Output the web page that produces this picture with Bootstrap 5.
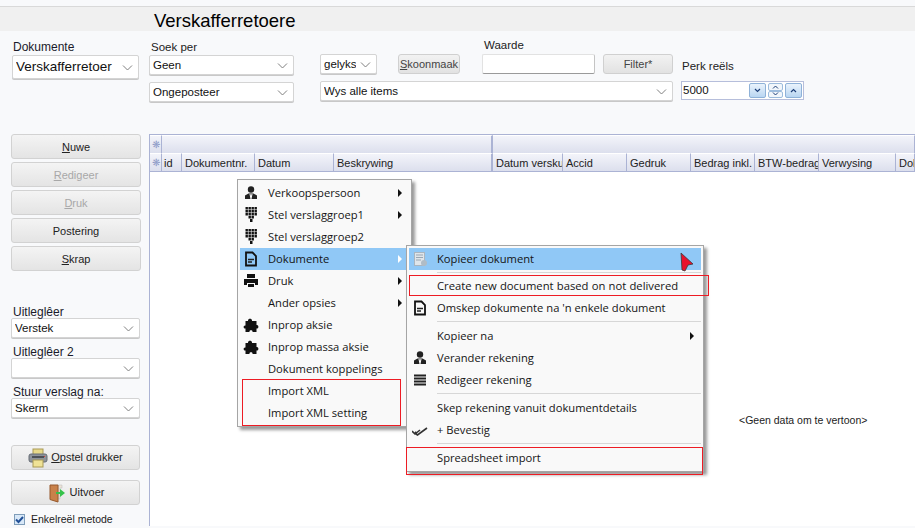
<!DOCTYPE html>
<html lang="en">
<head>
    <meta charset="UTF-8">
    <title>Verskafferretoere</title>
    <link href="https://cdn.jsdelivr.net/npm/bootstrap@5.3.0/dist/css/bootstrap.min.css" rel="stylesheet">
    <script src="https://cdn.jsdelivr.net/npm/bootstrap@5.3.0/dist/js/bootstrap.bundle.min.js"></script>
    <style>
        html, body { height: 100%; overflow: hidden; }
        body { background: #f8f9fb; font-family: "Liberation Sans", Arial, sans-serif; font-size: 11px; color: #111; position: relative; width: 915px; height: 528px; }

        /* Title strip */
        .top-gap { height: 6px; border-bottom: 1px solid #d9d9d9; box-sizing: content-box; }
        .title-strip { height: 24px; background: #f0f0f0; padding-left: 154px; font-size: 18.5px; line-height: 27px; color: #000; }

        /* Shared select look */
        .field-box.form-select { font-size: 11.5px; line-height: 16px; height: 20px; padding: 0 20px 0 3px; border: 1px solid #d4d4d4; border-radius: 2px; color: #111; background-size: 11px 11px; background-position: right 5px center; background-image: url("data:image/svg+xml,%3csvg xmlns='http://www.w3.org/2000/svg' viewBox='0 0 11 11'%3e%3cpath fill='none' stroke='%23808080' d='M1 3.500l4.500 4.500L10 3.500'/%3e%3c/svg%3e"); box-shadow: 0 1px 0 #c8c8c8; white-space: nowrap; overflow: hidden; text-overflow: clip; }

        /* Left column */
        .side-col { width: 149px; flex: none; }
        .side-label { margin: 9px 0 1px 13px; font-size: 12px; line-height: 14px; color: #1a1a2a; }
        .doc-select.form-select { width: 127px; height: 24px; margin-left: 12px; font-size: 13.5px; line-height: 20px; padding-left: 3px; }
        .gap-docs { height: 55px; }
        .side-btn.btn { display: block; width: 130px; height: 25px; margin: 0 0 3px 11px; padding: 0; font-size: 11px; line-height: 24px; color: #222; border: 1px solid #d2d2d2; border-radius: 3px; background: linear-gradient(#f4f4f4, #e4e4e4); }
        .side-btn.btn.off { color: #a8a8a8; opacity: 1; }
        .gap-layout { height: 32px; }
        .left-label { display: block; margin-left: 13px; font-size: 12px; line-height: 12px; color: #1a1a2a; }
        .left-label.spaced { margin-top: 8px; }
        .left-field.form-select { width: 129px; margin-left: 11px; }
        .gap-tools { height: 27px; }
        .tool-btn.btn { display: flex; align-items: center; justify-content: center; gap: 3px; width: 129px; height: 25px; margin-left: 11px; padding: 0; font-size: 11px; color: #222; border: 1px solid #d2d2d2; border-radius: 3px; background: linear-gradient(#f4f4f4, #e4e4e4); }
        .tool-btn.btn + .tool-btn.btn { margin-top: 10px; }
        .single-check { margin: 7px 0 0 14px; font-size: 10.5px; line-height: 14px; color: #222; gap: 6px; }
        .single-check input { appearance: none; width: 11px; height: 11px; margin: 0; border: 1px solid #7f9db9; background: #d8e8f8 url("data:image/svg+xml,%3csvg xmlns='http://www.w3.org/2000/svg' viewBox='0 0 11 11'%3e%3cpath fill='none' stroke='%23214f96' stroke-width='2' d='M2 5.500l2.500 2.500L9 3'/%3e%3c/svg%3e") center / 11px 11px no-repeat; }

        /* Filter area */
        .filter-area { height: 103px; }
        .filter-search { width: 171px; }
        .filter-search .form-select { width: 145px; }
        .filter-search .form-select + .form-select { margin-top: 7px; }
        .filter-label { font-size: 11.5px; line-height: 14px; color: #222; }
        .label-search { margin: 9px 0 1px 2px; }
        .filter-match { width: 353px; }
        .match-row { margin-top: 23px; }
        .match-select.form-select { width: 57px; margin-right: 21px; }
        .label-value { margin: -16px 0 2px 2px; }
        .items-select.form-select { width: 353px; margin-top: 7px; }
        .mid-btn.btn { height: 20px; padding: 0; font-size: 11px; line-height: 18px; color: #444; border: 1px solid #d0d0d0; border-radius: 3px; background: linear-gradient(#f2f2f2, #e2e2e2); }
        .clear-btn { width: 62px; }
        .filter-btn { width: 70px; }
        .value-box.form-control { width: 113px; height: 20px; padding: 0 3px; border: 1px solid #e2e2e2; border-bottom-color: #9a9a9a; border-right-color: #c4c4c4; border-radius: 2px; }
        .filter-limit { margin-left: 8px; }
        .label-limit { margin: 28px 0 8px 1px; }
        .limit-box { width: 123px; height: 19px; border: 1px solid #b6bedb; background: #fff; font-size: 11.5px; line-height: 17px; padding: 0 1px 0 1px; gap: 2px; }
        .spin-btn { width: 17px; height: 15px; border: 1px solid #8fb2d8; border-radius: 2px; background: linear-gradient(#eaf3fc, #b9d6f2); display: flex; align-items: center; justify-content: center; }
        .spin-mid { width: 15px; height: 15px; display: flex; flex-direction: column; }
        .spin-half { flex: 1; border: 1px solid #9dbcdd; border-radius: 2px; background: #f1f6fb; display: flex; align-items: center; justify-content: center; }

        /* Grid */
        .data-grid { flex: 1; border-left: 1px solid #abb3d4; background: #fff; height: 400px; overflow: hidden; position: relative; }
        .band-row, .head-row { display: grid; height: 19px; }
        .band-row { grid-template-columns: 12px 331px 1fr; border-top: 1px solid #abb3d4; }
        .head-row { grid-template-columns: 12px 20px 73px 79px 159px 70px 64px 64px 64px 64px 77px 1fr; border-bottom: 1px solid #abb3d4; }
        .hcell { height: 100%; padding-left: 3px; font-size: 11px; line-height: 18px; color: #222; background: linear-gradient(#f3f4fa, #dcdfed); border-right: 1px solid #abb3d4; white-space: nowrap; overflow: hidden; border-top: 1px solid #fff; }
        .hcell.split { border-right-width: 2px; }
        .hcell.star { color: #8f9cc8; font-size: 10px; padding-left: 2px; }
        .hcell.tight { padding-left: 2px; }
        .no-data { position: absolute; left: 589px; top: 279px; font-size: 10.500px; line-height: 14px; color: #222; }

        /* Context menus */
        .ctx-menu { position: absolute; display: block; margin: 0; padding: 2px; min-width: 0; background: #f9f9f9; border: 1px solid #a5a5a5; border-radius: 0; box-shadow: 3px 3px 3px rgba(0,0,0,.4); font-family: "Open Sans", "Noto Sans", sans-serif; color: #111; }
        .ctx-menu .dropdown-item { display: flex; align-items: center; height: 22px; padding: 0 0 0 28px; position: relative; font-size: 11.2px; color: #151515; white-space: nowrap; background: transparent; }
        .ctx-menu .dropdown-item.hot { background: #90c8f6; }
        .ctx-menu .dropdown-item.wide-item { font-size: 11.25px; word-spacing: .3px; }
        .ctx-menu .dropdown-divider { height: 0; margin: 2px 0 3px 28px; border-top: 1px solid #d7d7d7; opacity: 1; }
        .ctx-menu .dropdown-divider.first { margin-bottom: 2px; }
        .menu-one { left: 237px; top: 179px; width: 175px; z-index: 1001; }
        .menu-two { left: 406px; top: 245px; width: 298px; z-index: 1002; }
        .item-icon { position: absolute; left: 3px; top: 3px; width: 16px; height: 16px; }
        .sub-arrow { position: absolute; right: 7px; top: 7px; width: 0; height: 0; border-left: 4px solid #111; border-top: 4px solid transparent; border-bottom: 4px solid transparent; }
        .hot .sub-arrow { border-left-color: #fff; }

        /* Red annotations drawn on top of the screenshot */
        .red-mark { position: absolute; border: 1px solid #ed1c24; z-index: 1100; pointer-events: none; }
        .mark-xml { left: 242px; top: 379px; width: 159px; height: 47px; }
        .mark-create { left: 409px; top: 275px; width: 300px; height: 21px; }
        .mark-sheet { left: 406px; top: 447px; width: 297px; height: 28px; }
        .red-cursor { position: absolute; left: 680px; top: 252px; z-index: 1101; }
    </style>
</head>
<body>

<div class="top-gap"></div>
<div class="title-strip">Verskafferretoere</div>

<div class="d-flex">
    <!-- left column -->
    <div class="side-col">
        <div class="side-label">Dokumente</div>
        <select class="form-select field-box doc-select"><option>Verskafferretoer</option></select>

        <div class="gap-docs"></div>
        <button class="btn side-btn"><u>N</u>uwe</button>
        <button class="btn side-btn off"><u>R</u>edigeer</button>
        <button class="btn side-btn off"><u>D</u>ruk</button>
        <button class="btn side-btn">Postering</button>
        <button class="btn side-btn"><u>S</u>krap</button>

        <div class="gap-layout"></div>
        <span class="left-label">Uitleglêer</span>
        <select class="form-select field-box left-field"><option>Verstek</option></select>
        <span class="left-label spaced">Uitleglêer 2</span>
        <select class="form-select field-box left-field"><option></option></select>
        <span class="left-label spaced">Stuur verslag na:</span>
        <select class="form-select field-box left-field"><option>Skerm</option></select>

        <div class="gap-tools"></div>
        <button class="btn tool-btn">
            <svg width="20" height="20" viewBox="0 0 20 20"><rect x="5" y="1" width="10" height="6" fill="#e7d98a" stroke="#a99a55"/><rect x="1" y="6" width="18" height="8" rx="2" fill="#8d939b" stroke="#666c74"/><rect x="4" y="8" width="12" height="2" fill="#4d5157"/><rect x="16" y="8" width="1" height="1" fill="#d33"/><rect x="5" y="12" width="10" height="7" fill="#efe296" stroke="#a99a55"/></svg>
            <span><u>O</u>pstel drukker</span>
        </button>
        <button class="btn tool-btn">
            <svg width="20" height="20" viewBox="0 0 20 20"><path d="M11 2h4v3h-2v11h-2z" fill="#ece4d8" stroke="#bbb" stroke-width=".5"/><path d="M3 2l8 0v17l-8-2.500z" fill="#c9814a" stroke="#96592c"/><path d="M9 9h4V6l5 4-5 4v-3H9z" fill="#35c24a"/></svg>
            <span>Uitvoer</span>
        </button>
        <label class="d-flex align-items-center single-check">
            <input type="checkbox" checked> Enkelreël metode
        </label>
    </div>

    <!-- right side -->
    <div class="flex-grow-1 d-flex flex-column">
        <div class="filter-area d-flex">
            <div class="filter-search">
                <div class="filter-label label-search">Soek per</div>
                <select class="form-select field-box"><option>Geen</option></select>
                <select class="form-select field-box"><option>Ongeposteer</option></select>
            </div>
            <div class="filter-match">
                <div class="d-flex match-row">
                    <select class="form-select field-box match-select"><option>gelyksoortig</option></select>
                    <button class="btn mid-btn clear-btn"><u>S</u>koonmaak</button>
                    <div class="ms-auto">
                        <div class="filter-label label-value">Waarde</div>
                        <input class="form-control value-box" type="text">
                    </div>
                    <button class="btn mid-btn filter-btn ms-2">Filter*</button>
                </div>
                <select class="form-select field-box items-select"><option>Wys alle items</option></select>
            </div>
            <div class="filter-limit">
                <div class="filter-label label-limit">Perk reëls</div>
                <div class="d-flex align-items-center limit-box">
                    <span class="flex-grow-1">5000</span>
                    <span class="spin-btn"><svg width="7" height="5" viewBox="0 0 7 5"><path d="M1 1l2.500 2.500L6 1" fill="none" stroke="#1d3f78" stroke-width="1.200"/></svg></span>
                    <span class="spin-mid">
                        <span class="spin-half"><svg width="7" height="4" viewBox="0 0 7 4"><path d="M1 3.500L3.500 1 6 3.500" fill="none" stroke="#1d3f78"/></svg></span>
                        <span class="spin-half"><svg width="7" height="4" viewBox="0 0 7 4"><path d="M1 .500L3.500 3 6 .500" fill="none" stroke="#1d3f78"/></svg></span>
                    </span>
                    <span class="spin-btn"><svg width="7" height="5" viewBox="0 0 7 5"><path d="M1 4l2.500-2.500L6 4" fill="none" stroke="#1d3f78" stroke-width="1.200"/></svg></span>
                </div>
            </div>
        </div>

        <div class="data-grid">
            <div class="band-row">
                <div class="hcell star">❋</div>
                <div class="hcell split"></div>
                <div class="hcell"></div>
            </div>
            <div class="head-row">
                <div class="hcell star">❋</div>
                <div class="hcell tight">id</div>
                <div class="hcell">Dokumentnr.</div>
                <div class="hcell">Datum</div>
                <div class="hcell split">Beskrywing</div>
                <div class="hcell">Datum versku</div>
                <div class="hcell">Accid</div>
                <div class="hcell">Gedruk</div>
                <div class="hcell">Bedrag inkl.</div>
                <div class="hcell">BTW-bedrag</div>
                <div class="hcell">Verwysing</div>
                <div class="hcell">Dok</div>
            </div>
            <div class="no-data">&lt;Geen data om te vertoon&gt;</div>
        </div>
    </div>
</div>

<!-- first context menu -->
<ul class="dropdown-menu ctx-menu menu-one list-unstyled">
    <li><a class="dropdown-item"><svg class="item-icon"><use href="#i-person"/></svg>Verkoopspersoon<i class="sub-arrow"></i></a></li>
    <li><a class="dropdown-item"><svg class="item-icon"><use href="#i-dots"/></svg>Stel verslaggroep1<i class="sub-arrow"></i></a></li>
    <li><a class="dropdown-item"><svg class="item-icon"><use href="#i-dots"/></svg>Stel verslaggroep2</a></li>
    <li><a class="dropdown-item hot"><svg class="item-icon"><use href="#i-doc"/></svg>Dokumente<i class="sub-arrow"></i></a></li>
    <li><a class="dropdown-item"><svg class="item-icon"><use href="#i-print"/></svg>Druk<i class="sub-arrow"></i></a></li>
    <li><a class="dropdown-item">Ander opsies<i class="sub-arrow"></i></a></li>
    <li><a class="dropdown-item"><svg class="item-icon"><use href="#i-puzzle"/></svg>Inprop aksie</a></li>
    <li><a class="dropdown-item"><svg class="item-icon"><use href="#i-puzzle"/></svg>Inprop massa aksie</a></li>
    <li><a class="dropdown-item">Dokument koppelings</a></li>
    <li><a class="dropdown-item">Import XML</a></li>
    <li><a class="dropdown-item">Import XML setting</a></li>
</ul>

<!-- second context menu -->
<ul class="dropdown-menu ctx-menu menu-two list-unstyled">
    <li><a class="dropdown-item hot"><svg class="item-icon" viewBox="0 0 16 16"><rect x="2.500" y="1.500" width="10" height="13" fill="#dfe5ea" stroke="#aab5bf"/><path d="M4 4h7M4 6.500h7M4 9h5" stroke="#9aa7b3"/><circle cx="12" cy="12" r="3" fill="#b0bcc6"/></svg>Kopieer dokument</a></li>
    <li><hr class="dropdown-divider first"></li>
    <li><a class="dropdown-item wide-item">Create new document based on not delivered</a></li>
    <li><a class="dropdown-item"><svg class="item-icon"><use href="#i-doc"/></svg>Omskep dokumente na 'n enkele dokument</a></li>
    <li><hr class="dropdown-divider"></li>
    <li><a class="dropdown-item">Kopieer na<i class="sub-arrow"></i></a></li>
    <li><a class="dropdown-item"><svg class="item-icon"><use href="#i-person"/></svg>Verander rekening</a></li>
    <li><a class="dropdown-item"><svg class="item-icon" viewBox="0 0 16 16"><path d="M2 2.500h12v2H2zM2 5.500h12v2H2zM2 8.500h12v2H2zM2 11.500h12v2H2z" fill="#222"/></svg>Redigeer rekening</a></li>
    <li><hr class="dropdown-divider"></li>
    <li><a class="dropdown-item">Skep rekening vanuit dokumentdetails</a></li>
    <li><a class="dropdown-item"><svg class="item-icon" viewBox="0 0 16 16"><path d="M0 9l3 3 5-4M4 12l1.500 1L15 6M3 10l2 1.500" fill="none" stroke="#333" stroke-width="1.600"/></svg>+ Bevestig</a></li>
    <li><hr class="dropdown-divider"></li>
    <li><a class="dropdown-item">Spreadsheet import</a></li>
</ul>

<div class="red-mark mark-xml"></div>
<div class="red-mark mark-create"></div>
<div class="red-mark mark-sheet"></div>
<svg class="red-cursor" width="14" height="20" viewBox="0 0 14 20"><path d="M1 1l12 11-5 1-3 6-3-1z" fill="#e8112d" stroke="#3a3a3a" stroke-width=".8"/></svg>

<!-- shared icons -->
<svg width="0" height="0" class="position-absolute">
    <symbol id="i-person" viewBox="0 0 16 16"><circle cx="8" cy="4.500" r="3.200" fill="#222"/><path d="M2 14v-3.500l3.500-2h5l3.500 2V14z" fill="#222"/><path d="M6.500 9h1l.5 2 .5-2h1L8.500 14h-1z" fill="#fff"/></symbol>
    <symbol id="i-dots" viewBox="0 0 16 16"><path d="M2.500 0h2.400v2.400H2.500zM5.500 0h2.400v2.400H5.500zM8.500 0h2.400v2.400H8.500zM11.500 0h2.400v2.400h-2.400zM2.500 3h2.400v2.400H2.500zM5.500 3h2.400v2.400H5.500zM8.500 3h2.400v2.400H8.500zM11.500 3h2.400v2.400h-2.400zM2.500 6h2.400v2.400H2.500zM5.500 6h2.400v2.400H5.500zM8.500 6h2.400v2.400H8.500zM11.500 6h2.400v2.400h-2.400zM5.500 9h2.400v2.400H5.500zM8.500 9h2.400v2.400H8.500zM7 12h2.500v3H7z" fill="#111"/></symbol>
    <symbol id="i-doc" viewBox="0 0 16 16"><path d="M3 1.500h6.500L13 5v9.500H3z" fill="none" stroke="#111" stroke-width="1.800"/><path d="M5 8.500h6M5 11h4" stroke="#222" stroke-width="1.400"/></symbol>
    <symbol id="i-print" viewBox="0 0 16 16"><path d="M4 1h8v4H4zM1 6h14v6h-3v-2H4v2H1zM5 11h6v3H5z" fill="#111"/></symbol>
    <symbol id="i-puzzle" viewBox="0 0 16 16"><path d="M5 3.500C5 1 9 1 9 3.500V4h4.500v4c2.500-.500 2.500 4 0 3.500V15H9.500c.500-2.500-3.500-2.500-3 0H2.500v-3.500C0 12 0 8 2.500 8.500V4H5z" fill="#111"/></symbol>
</svg>

</body>
</html>
